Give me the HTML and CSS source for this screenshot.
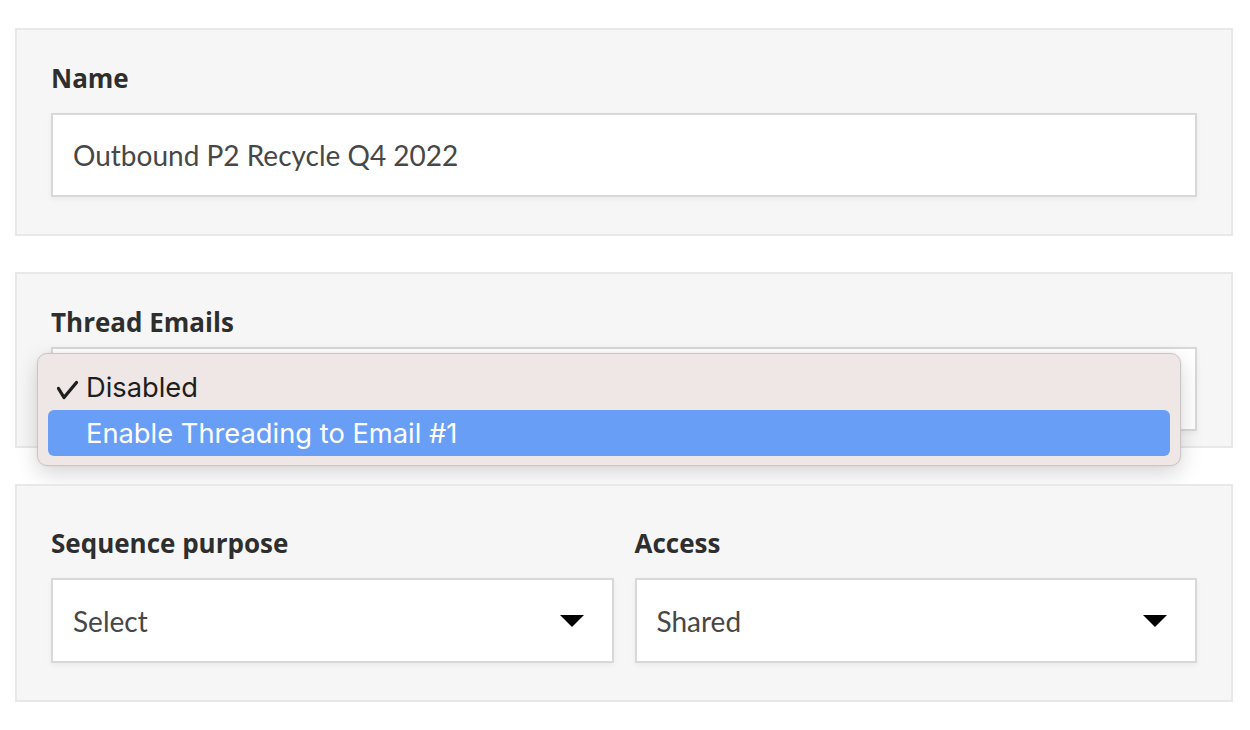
FILE: index.html
```html
<!DOCTYPE html>
<html>
<head>
<meta charset="utf-8">
<link rel="stylesheet" href="styles.css">
</head>
<body>
<div class="page">
  <section class="panel panel-name">
    <label class="label">Name</label>
    <div class="field">Outbound P2 Recycle Q4 2022</div>
  </section>

  <section class="panel panel-thread">
    <label class="label">Thread Emails</label>
    <div class="field field-thread"></div>
    <div class="menu">
      <div class="menu-item checked"><svg class="check" width="24" height="21" viewBox="0 0 24 21"><path d="M3.5 8.5 L9 17.5 L21.5 2.5" fill="none" stroke="#1e1e1e" stroke-width="3.3" stroke-linecap="round" stroke-linejoin="round"/></svg>Disabled</div>
      <div class="menu-item active">Enable Threading to Email #1</div>
    </div>
  </section>

  <section class="panel panel-two">
    <div class="col">
      <label class="label">Sequence purpose</label>
      <div class="field select"><span>Select</span><span class="caret"></span></div>
    </div>
    <div class="col">
      <label class="label">Access</label>
      <div class="field select"><span>Shared</span><span class="caret"></span></div>
    </div>
  </section>
</div>
</body>
</html>
```

FILE: styles.css
```css
html, body {
  margin: 0;
  padding: 0;
  background: #ffffff;
}
body {
  font-family: Lato, "Liberation Sans", sans-serif;
  color: #333;
}
.page {
  padding: 28px 17px 0 15px;
  display: flex;
  flex-direction: column;
  gap: 36px;
}
.panel {
  position: relative;
  background: #f6f6f6;
  border: 2px solid #e8e8e8;
  padding: 34px 34px 37px 34px;
  display: flex;
  flex-direction: column;
}
.label {
  display: block;
  font-family: "Open Sans", Lato, sans-serif;
  font-weight: 700;
  font-size: 26px;
  line-height: 28px;
  color: #2e2e2e;
}
.field {
  margin-top: 21px;
  background: #fff;
  border: 2px solid #d8d8d8;
  box-shadow: 0 2px 6px rgba(0,0,0,0.05);
  box-sizing: border-box;
  height: 84px;
  padding: 0 20px;
  display: flex;
  align-items: center;
  font-size: 28px;
  color: #474747;
}
.panel-thread {
  padding-bottom: 15px;
}
.field-thread {
  margin-top: 11px;
}
.panel-two {
  flex-direction: row;
  gap: 21px;
  padding-top: 43px;
  padding-bottom: 37px;
}
.panel-two .field {
  margin-top: 21px;
  height: 85px;
}
.col {
  flex: 1;
  display: flex;
  flex-direction: column;
}
.select {
  justify-content: space-between;
}
.caret {
  width: 0;
  height: 0;
  border-left: 12px solid transparent;
  border-right: 12px solid transparent;
  border-top: 12px solid #000;
  margin-right: 8px;
}
.menu {
  position: absolute;
  left: 20px;
  top: 79px;
  width: 1144px;
  height: 113px;
  box-sizing: border-box;
  background: #efe7e5;
  border: 1px solid #c9c6c5;
  border-radius: 10px;
  box-shadow: 0 8px 22px rgba(0,0,0,0.16), 0 0 3px rgba(0,0,0,0.06);
  padding: 10px 10px 9px 10px;
  display: flex;
  flex-direction: column;
  justify-content: flex-end;
  font-family: Inter, "Noto Sans", sans-serif;
  font-size: 27.3px;
}
.menu-item {
  height: 46px;
  display: flex;
  align-items: center;
  padding-left: 38px;
  position: relative;
  color: #1e1e1e;
  border-radius: 6px;
}
.check {
  position: absolute;
  left: 7px;
  top: 16px;
}
.active {
  background: #699ef7;
  color: #fff;
}
```
